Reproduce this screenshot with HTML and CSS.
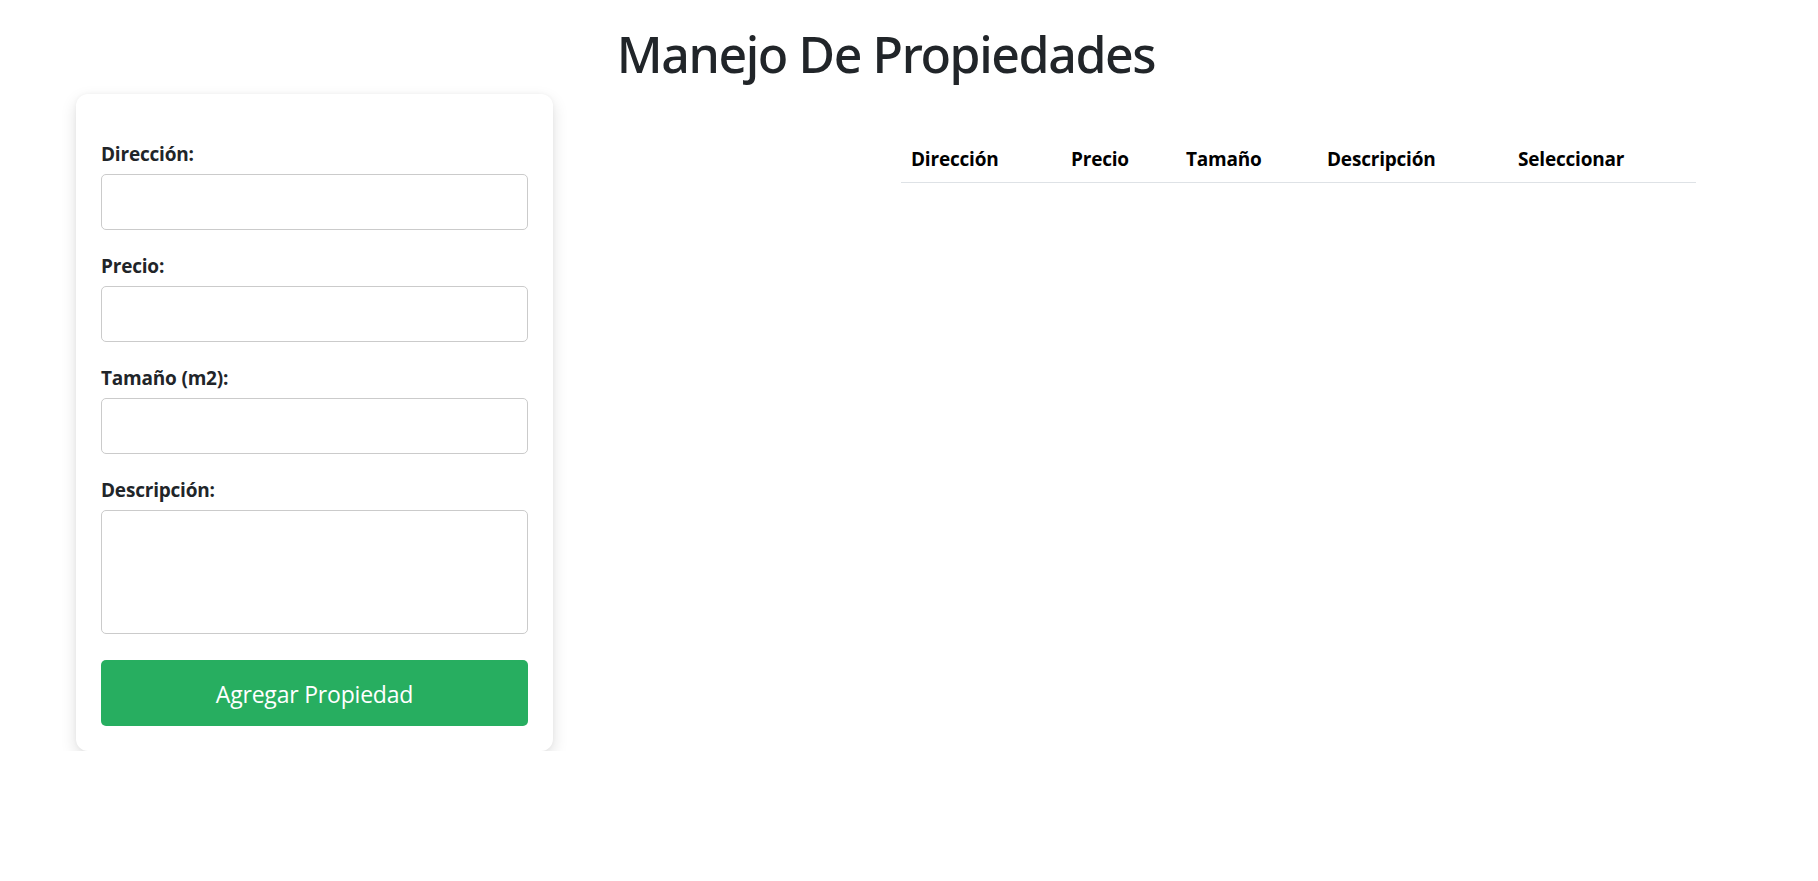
FILE: index.html
```html
<!DOCTYPE html>
<html lang="es">
<head>
<meta charset="utf-8">
<title>Manejo De Propiedades</title>
<link rel="stylesheet" href="styles.css">
</head>
<body>
<div class="page">
  <h1 class="title">Manejo De Propiedades</h1>
  <div class="layout">
    <form class="card">
      <div class="group">
        <label class="label" for="dir">Dirección:</label>
        <input class="control" id="dir" type="text">
      </div>
      <div class="group">
        <label class="label" for="precio">Precio:</label>
        <input class="control" id="precio" type="text">
      </div>
      <div class="group">
        <label class="label" for="tam">Tamaño (m2):</label>
        <input class="control" id="tam" type="text">
      </div>
      <div class="group">
        <label class="label" for="desc">Descripción:</label>
        <textarea class="control area" id="desc"></textarea>
      </div>
      <button class="btn" type="button">Agregar Propiedad</button>
    </form>
    <div class="table-wrap">
      <table class="table">
        <colgroup>
          <col class="c1"><col class="c2"><col class="c3"><col class="c4"><col class="c5">
        </colgroup>
        <thead>
          <tr>
            <th>Dirección</th>
            <th>Precio</th>
            <th>Tamaño</th>
            <th>Descripción</th>
            <th>Seleccionar</th>
          </tr>
        </thead>
        <tbody></tbody>
      </table>
    </div>
  </div>
</div>
</body>
</html>
```
FILE: styles.css
```css
* { box-sizing: border-box; }
html, body { margin: 0; padding: 0; background: #fff; }
body {
  font-family: "Open Sans", "Noto Sans", "Liberation Sans", sans-serif;
  color: #212529;
  font-size: 20px;
  line-height: 1.5;
}
.page {
  margin-left: 76px;
  width: 1620px;
  padding-top: 24px;
}
.title {
  margin: 0 0 10px 0;
  text-align: center;
  font-family: "Noto Sans", "Open Sans", sans-serif;
  font-size: 50px;
  font-weight: 500;
  line-height: 60px;
  color: #212529;
  letter-spacing: -1.4px;
}
.layout {
  display: flex;
  align-items: flex-start;
}
.card {
  width: 477px;
  background: #fff;
  border-radius: 12px;
  padding: 44px 25px 25px 25px;
  box-shadow: 0 6px 16px rgba(0,0,0,0.13), 0 0 4px rgba(0,0,0,0.04);
  display: flex;
  flex-direction: column;
}
.group {
  display: flex;
  flex-direction: column;
  margin-bottom: 20px;
}
.label {
  font-weight: 700;
  font-size: 19px;
  line-height: 30px;
  padding-top: 1px;
  margin-bottom: 5px;
  color: #212529;
  letter-spacing: -0.2px;
}
.control {
  display: block;
  width: 100%;
  height: 56px;
  border: 1px solid #cbcbcb;
  border-radius: 5px;
  background: #fff;
  font: inherit;
  padding: 10px 12px;
}
.area {
  height: 124px;
  resize: none;
}
.group:last-of-type { margin-bottom: 26px; }
.btn {
  height: 66px;
  width: 100%;
  border: none;
  border-radius: 5px;
  background: #27ae60;
  color: #fff;
  font-family: inherit;
  font-size: 23px;
  line-height: 1.5;
  padding: 2px 0 0 0;
  letter-spacing: -0.2px;
}
.table-wrap {
  margin-left: auto;
  width: 795px;
  margin-top: 38px;
}
.table {
  width: 100%;
  border-collapse: collapse;
  table-layout: fixed;
}
.c1 { width: 160px; }
.c2 { width: 115px; }
.c3 { width: 141px; }
.c4 { width: 191px; }
.c5 { width: 188px; }
.table th {
  text-align: left;
  font-weight: 700;
  font-size: 19px;
  line-height: 30px;
  padding: 12px 10px 8px 10px;
  color: #000;
  border-bottom: 1px solid #dee2e6;
  letter-spacing: -0.2px;
}
```
